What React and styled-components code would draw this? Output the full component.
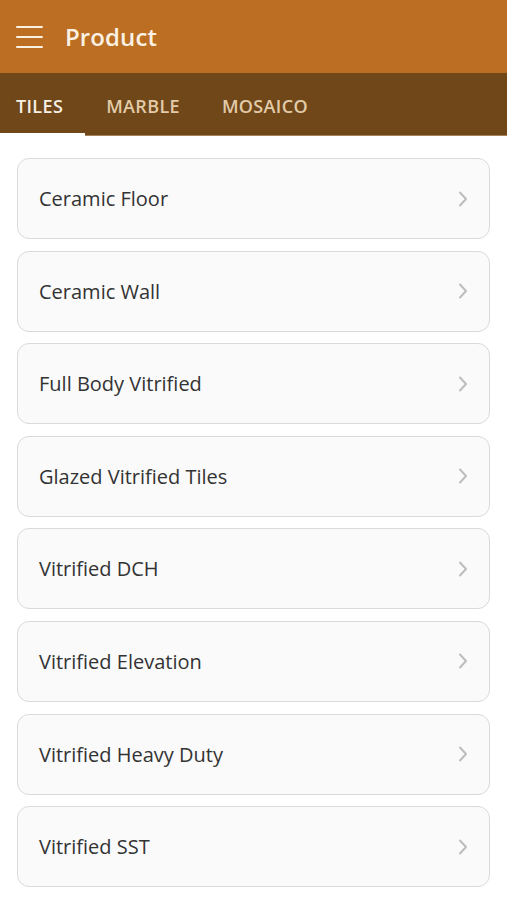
import React from 'react';
import styled, { createGlobalStyle } from 'styled-components';

const GlobalStyle = createGlobalStyle`
  * { box-sizing: border-box; }
  body {
    margin: 0;
    background: #ffffff;
    font-family: "Open Sans", "Noto Sans", sans-serif;
  }
`;

const Page = styled.div`
  width: 507px;
  min-height: 900px;
  background: #ffffff;
`;

const Header = styled.header`
  height: 73px;
  background: #bc6e22;
  display: flex;
  align-items: center;
  padding-left: 16px;
  gap: 22px;
`;

const MenuButton = styled.button`
  border: 0;
  background: none;
  padding: 0;
  width: 27px;
  height: 22px;
  display: flex;
  flex-direction: column;
  justify-content: space-between;
  cursor: pointer;

  span {
    display: block;
    height: 2px;
    background: #fbf1e2;
    border-radius: 1px;
  }
`;

const Title = styled.h1`
  margin: 0;
  color: #fbf1e2;
  font-size: 24px;
  font-weight: 600;
  letter-spacing: 0.1px;
`;

const TabBar = styled.nav`
  height: 63px;
  background: #6f4719;
  display: flex;
  border-bottom: 1px solid #a4835d;
`;

const Tab = styled.button`
  border: 0;
  background: none;
  padding: 3px 21px 0;
  font-family: inherit;
  font-size: 18px;
  font-weight: 600;
  letter-spacing: 0.35px;
  color: ${p => (p.$active ? '#f7efe3' : '#e2cba9')};
  position: relative;
  cursor: pointer;

  &:first-child {
    padding-left: 16px;
    padding-right: 22px;
  }

  &::after {
    content: '';
    position: absolute;
    left: 0;
    right: 0;
    bottom: -1px;
    height: 3px;
    background: ${p => (p.$active ? '#ffffff' : 'transparent')};
  }
`;

const List = styled.div`
  display: flex;
  flex-direction: column;
  gap: 11.6px;
  padding: 22px 17px 0;
`;

const Card = styled.div`
  height: 81px;
  border: 1.5px solid #dadada;
  border-radius: 12px;
  background: #fafafa;
  display: flex;
  align-items: center;
  justify-content: space-between;
  padding: 0 20px 0 21px;
  cursor: pointer;
`;

const Label = styled.span`
  font-size: 20px;
  color: #333333;
`;

const Chevron = () => (
  <svg width="12" height="16" viewBox="0 0 12 16" fill="none">
    <path d="M3 1.5 L9 8 L3 14.5" stroke="#bdbdbd" strokeWidth="2" strokeLinecap="round" strokeLinejoin="round" />
  </svg>
);

const tabs = [
  { name: 'TILES', active: true },
  { name: 'MARBLE' },
  { name: 'MOSAICO' },
];

const items = [
  'Ceramic Floor',
  'Ceramic Wall',
  'Full Body Vitrified',
  'Glazed Vitrified Tiles',
  'Vitrified DCH',
  'Vitrified Elevation',
  'Vitrified Heavy Duty',
  'Vitrified SST',
];

export default function App() {
  return (
    <Page>
      <GlobalStyle />
      <Header>
        <MenuButton aria-label="menu">
          <span />
          <span />
          <span />
        </MenuButton>
        <Title>Product</Title>
      </Header>
      <TabBar>
        {tabs.map(t => (
          <Tab key={t.name} $active={t.active}>{t.name}</Tab>
        ))}
      </TabBar>
      <List>
        {items.map(name => (
          <Card key={name}>
            <Label>{name}</Label>
            <Chevron />
          </Card>
        ))}
      </List>
    </Page>
  );
}
